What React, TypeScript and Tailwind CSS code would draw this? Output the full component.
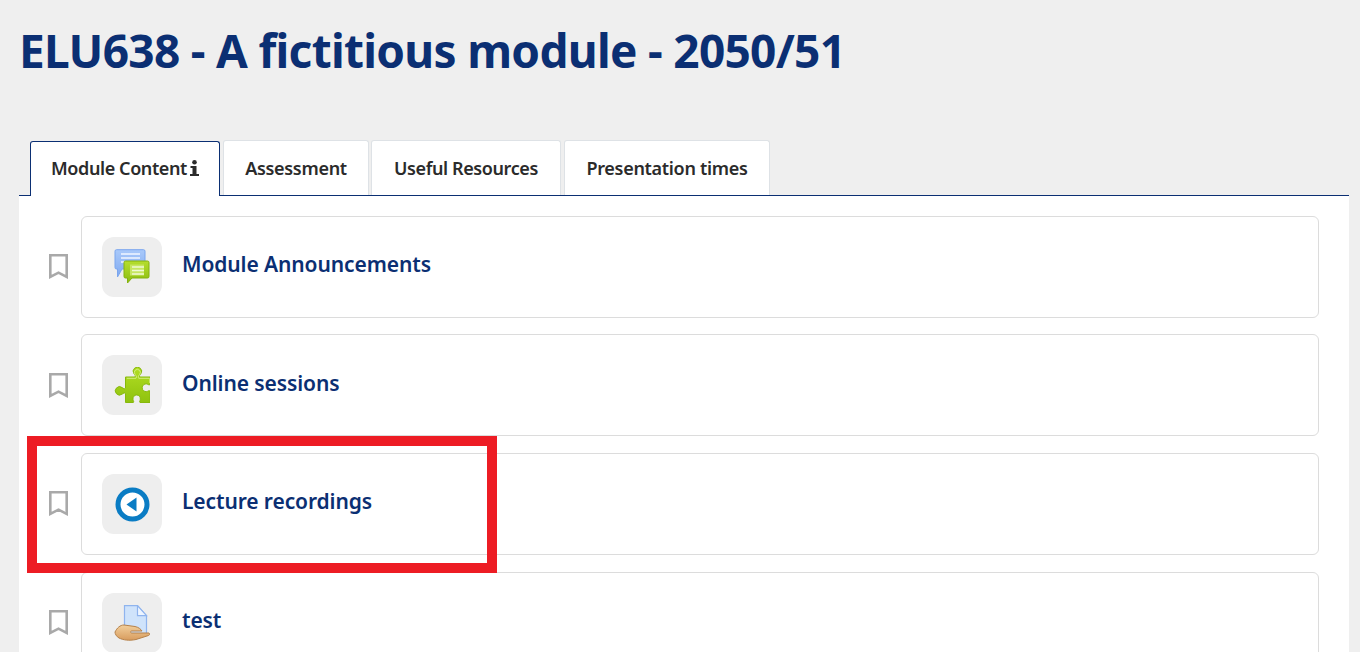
import type { ReactNode } from 'react';

const font = { fontFamily: '"Noto Sans", sans-serif' };

function BookmarkIcon() {
  return (
    <svg width="19" height="25" viewBox="0 0 19 25" fill="none" className="shrink-0">
      <path d="M1.300 1.300h16.400v21.600l-8.200-4.300-8.200 4.300z" stroke="#a9a9a9" strokeWidth="2.600" />
    </svg>
  );
}

function ForumIcon() {
  return (
    <svg width="36" height="36" viewBox="0 0 36 36">
      <defs>
        <linearGradient id="forum-blue" x1="0" y1="0" x2="0" y2="1">
          <stop offset="0" stopColor="#a9c9fa" />
          <stop offset="1" stopColor="#7fa9f0" />
        </linearGradient>
        <linearGradient id="forum-green" x1="0" y1="0" x2="0" y2="1">
          <stop offset="0" stopColor="#b5de2e" />
          <stop offset="1" stopColor="#8cbc10" />
        </linearGradient>
      </defs>
      <path d="M2.500.7h27a1.500 1.500 0 0 1 1.500 1.500V20H8l-4.500 8V20H2.500A1.500 1.500 0 0 1 1 18.500V2.200A1.500 1.500 0 0 1 2.500.7z" fill="url(#forum-blue)" stroke="#7ba6ee" />
      <path d="M7 5h19M7 9h19M7 13h15" stroke="#f1f6ff" strokeWidth="1.500" />
      <path d="M11.500 12h22a1.500 1.500 0 0 1 1.500 1.500v14a1.500 1.500 0 0 1-1.500 1.500H18l-4.500 5v-5h-2a1.500 1.500 0 0 1-1.500-1.500v-14a1.500 1.500 0 0 1 1.500-1.500z" fill="url(#forum-green)" stroke="#84b20f" />
      <path d="M16 15.500h14v11H16z" fill="#c6e660" />
      <path d="M18 18h12M18 21.500h12M18 25h12" stroke="#f0f9d2" strokeWidth="1.500" />
    </svg>
  );
}

function PuzzleIcon() {
  return (
    <svg width="36" height="36" viewBox="0 0 36 36">
      <defs>
        <linearGradient id="puzzle-green" x1="0" y1="0" x2="0" y2="1">
          <stop offset="0" stopColor="#b2de24" />
          <stop offset="1" stopColor="#8fc20e" />
        </linearGradient>
      </defs>
      <path
        d="M11.500 10H21c1-1.200-.2-2-1-3.200a4.200 4.200 0 1 1 6.800 0c-.8 1.200-2 2-1 3.200H36v7.500c-1.200 1-2-.4-3.300-.6a3.900 3.900 0 1 0 0 7.700c1.300-.2 2.100-1.500 3.300-.5V35.500H26c-1-1.200.4-1.800.3-3.200a3.700 3.700 0 1 0-7.300 0c-.1 1.400 1.300 2 .3 3.200h-7.800v-9c-1-1.200-2-.2-3.300.6a4.200 4.200 0 1 1 0-6.500c1.300.8 2.300 1.800 3.300.6z"
        fill="url(#puzzle-green)"
        stroke="#86b80c"
      />
      <path
        d="M12.800 11.300H22c1.200-1.500-.2-2.800-1-4a3 3 0 1 1 4.700 0c-.8 1.200-2.200 2.500-1 4h11v4.800"
        fill="none"
        stroke="#d3ee7c"
      />
    </svg>
  );
}

function PlaybackIcon() {
  return (
    <svg width="36" height="36" viewBox="0 0 36 36">
      <circle cx="18.500" cy="18.500" r="14.500" fill="#fff" stroke="#0a7cc4" strokeWidth="5" />
      <path d="M22.500 11.500v14l-10-7z" fill="#0a7cc4" />
    </svg>
  );
}

function FileHandIcon() {
  return (
    <svg width="36" height="36" viewBox="0 0 36 36">
      <defs>
        <linearGradient id="hand-skin" x1="0" y1="0" x2="0" y2="1">
          <stop offset="0" stopColor="#f2cf9c" />
          <stop offset="1" stopColor="#d89c5e" />
        </linearGradient>
      </defs>
      <path d="M10.500.7h13l9 10V29h-22z" fill="#cfe3fb" stroke="#8fb4ee" strokeWidth="1.200" />
      <path d="M23.500.7v10h9z" fill="#eef5ff" stroke="#8fb4ee" strokeWidth="1.200" />
      <path
        d="M1 27c2-4 5-7 9-7l11 1.500c4 .8 6 3 7 4.500H18c-2 0-2 2 0 2h17c1 1 1 1.800-.5 2.500L22 34.500c-7 1.500-13 .5-17-1.500-2.500-1.500-4-4-4-6z"
        fill="url(#hand-skin)"
        stroke="#b5814a"
      />
    </svg>
  );
}

const rows: { title: string; icon: ReactNode }[] = [
  { title: 'Module Announcements', icon: <ForumIcon /> },
  { title: 'Online sessions', icon: <PuzzleIcon /> },
  { title: 'Lecture recordings', icon: <PlaybackIcon /> },
  { title: 'test', icon: <FileHandIcon /> },
];

export default function App() {
  return (
    <div className="relative h-[652px] w-[1360px] overflow-hidden bg-[#efefef]" style={font}>
      <h1 className="h-[140px] pl-[19px] pt-[19px] text-[46px] font-bold leading-[62px] tracking-[-0.7px] text-[#0b2f73]">
        ELU638 - A fictitious module - 2050/51
      </h1>

      <div className="ml-[19px] flex w-[1330px] flex-col">
        {/* Tabs */}
        <div className="flex h-[56px] items-start border-b border-[#0b2f73] pl-[11px] text-[18px] font-semibold tracking-[-0.3px] text-[#2b2b2b]">
          <button className="mt-px flex h-[55px] w-[190px] items-center justify-center gap-[3px] rounded-t-[3px] border border-b-0 border-[#0b2f73] bg-white pb-[2px] tracking-[-0.4px]">
            Module Content
            <svg width="9" height="16" viewBox="0 0 9 16">
              <circle cx="4.500" cy="2.300" r="2.300" fill="#2b2b2b" />
              <path d="M.5 6h6v8H9v2H0v-2h2.500V8H.5z" fill="#2b2b2b" />
            </svg>
          </button>
          <button className="ml-[3px] flex h-[55px] w-[146px] items-center justify-center rounded-t-[3px] border border-b-0 border-[#dee2e6] bg-white">
            Assessment
          </button>
          <button className="ml-[2px] flex h-[55px] w-[190px] items-center justify-center rounded-t-[3px] border border-b-0 border-[#dee2e6] bg-white tracking-[-0.4px]">
            Useful Resources
          </button>
          <button className="ml-[3px] flex h-[55px] w-[206px] items-center justify-center rounded-t-[3px] border border-b-0 border-[#dee2e6] bg-white">
            Presentation times
          </button>
        </div>

        {/* Activity list */}
        <div className="flex h-[460px] flex-col gap-[16.550px] bg-white pt-[19.900px] pr-[30px] pl-[30px]">
          {rows.map((row) => (
            <div key={row.title} className="flex items-center gap-[13px]">
              <BookmarkIcon />
              <div className="flex h-[102px] flex-1 shrink-0 items-center gap-5 rounded-[6px] border border-[#dcdcdc] bg-white pl-[20px]">
                <div className="flex h-[60px] w-[60px] items-center justify-center rounded-[12px] bg-[#eeeeee]">
                  {row.icon}
                </div>
                <a className="pb-1 text-[21px] font-semibold tracking-[-0.1px] text-[#0b2f73]">{row.title}</a>
              </div>
            </div>
          ))}
        </div>
      </div>

      {/* Annotation box */}
      <div className="absolute left-[27px] top-[436px] h-[137px] w-[470px] border-[10px] border-[#ed1c24]" />
    </div>
  );
}
